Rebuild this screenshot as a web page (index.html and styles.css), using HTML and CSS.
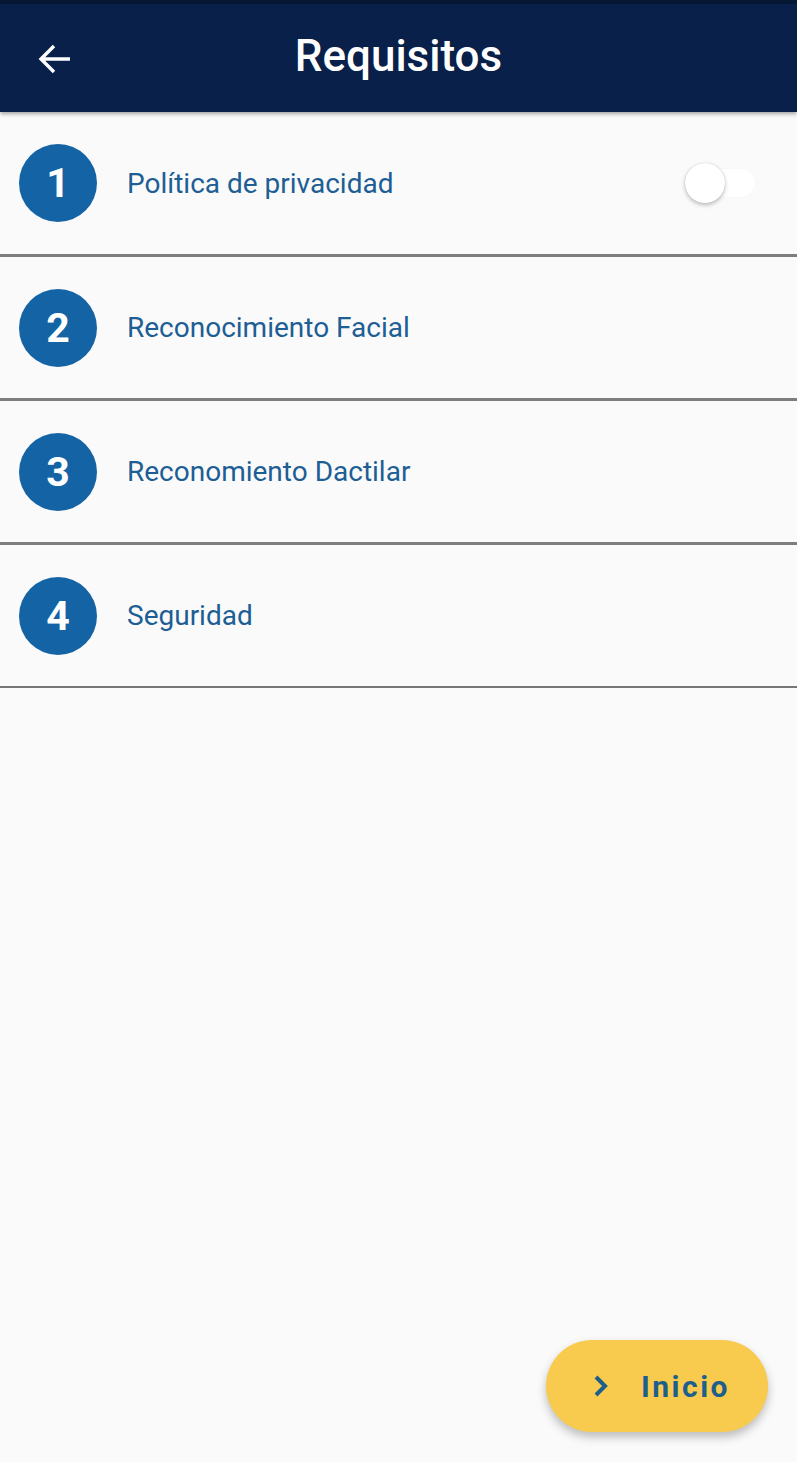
FILE: index.html
```html
<!DOCTYPE html>
<html lang="es">
<head>
<meta charset="utf-8">
<title>Requisitos</title>
<link rel="stylesheet" href="styles.css">
</head>
<body>
<div class="screen">
  <header class="appbar">
    <button class="back" aria-label="Atrás">
      <svg width="34" height="30" viewBox="0 0 34 30"><path d="M32 15H3M16 2L3 15l13 13" fill="none" stroke="#fff" stroke-width="3.4" stroke-linecap="butt" stroke-linejoin="miter"/></svg>
    </button>
    <h1 class="title">Requisitos</h1>
  </header>
  <ul class="steps">
    <li class="step first">
      <span class="num">1</span>
      <span class="label">Política de privacidad</span>
      <span class="switch"><span class="track"></span><span class="thumb"></span></span>
    </li>
    <li class="step">
      <span class="num">2</span>
      <span class="label">Reconocimiento Facial</span>
    </li>
    <li class="step">
      <span class="num">3</span>
      <span class="label">Reconomiento Dactilar</span>
    </li>
    <li class="step last">
      <span class="num">4</span>
      <span class="label">Seguridad</span>
    </li>
  </ul>
  <div class="fab-wrap">
    <button class="fab">
      <svg width="16" height="24" viewBox="0 0 16 24"><path d="M3 3l9 9-9 9" fill="none" stroke="#1d5e8c" stroke-width="4"/></svg>
      <span>Inicio</span>
    </button>
  </div>
</div>
</body>
</html>
```
FILE: styles.css
```css
* { box-sizing: border-box; }
html, body { margin: 0; padding: 0; }
body {
  background: #fafafa;
  font-family: Roboto, "Noto Sans", sans-serif;
  width: 797px;
  height: 1462px;
  overflow: hidden;
}
.screen {
  display: flex;
  flex-direction: column;
  height: 1462px;
}
.appbar {
  height: 112px;
  background: #08204a;
  border-top: 4px solid #061733;
  display: flex;
  align-items: center;
  justify-content: center;
  position: relative;
  box-shadow: 0 2px 4px rgba(0,0,0,0.35);
  z-index: 2;
}
.back {
  position: absolute;
  left: 38px;
  top: 40px;
  background: none;
  border: 0;
  padding: 0;
  display: flex;
}
.title {
  margin: 0;
  color: #fff;
  font-weight: 500;
  font-size: 44px;
  line-height: 1;
  margin-top: -4px;
}
.steps {
  list-style: none;
  margin: 0;
  padding: 0;
}
.step {
  height: 144px;
  border-bottom: 3px solid #7d7d7d;
  display: flex;
  align-items: center;
  padding-left: 19px;
  padding-right: 42px;
}
.step.first {
  height: 145px;
}
.step.last {
  height: 143px;
  border-bottom: 2px solid #777;
}
.num {
  width: 78px;
  height: 78px;
  border-radius: 50%;
  background: #1463a5;
  color: #fff;
  font-weight: 700;
  font-size: 41px;
  display: flex;
  align-items: center;
  justify-content: center;
  flex: none;
}
.label {
  margin-left: 30px;
  font-size: 28px;
  color: #1d5e94;
  flex: 1;
}
.switch {
  position: relative;
  width: 70px;
  height: 40px;
  flex: none;
}
.track {
  position: absolute;
  left: 16px;
  right: 0;
  top: 6px;
  height: 28px;
  border-radius: 14px;
  background: #ffffff;
  box-shadow: 0 0 2px rgba(0,0,0,0.04);
}
.thumb {
  position: absolute;
  left: 0;
  top: 0;
  width: 40px;
  height: 40px;
  border-radius: 50%;
  background: #fff;
  box-shadow: 0 2px 4px rgba(0,0,0,0.25), 0 0 1px rgba(0,0,0,0.2);
}
.fab-wrap {
  flex: 1;
  display: flex;
  justify-content: flex-end;
  align-items: flex-end;
  padding: 0 29px 30px 0;
}
.fab {
  width: 222px;
  height: 92px;
  border-radius: 46px;
  border: 0;
  background: #f8cb4e;
  box-shadow: 0 5px 10px rgba(0,0,0,0.25);
  display: flex;
  align-items: center;
  padding-left: 47px;
  gap: 32px;
  font-family: Roboto, sans-serif;
  font-weight: 700;
  font-size: 30px;
  letter-spacing: 2.5px;
  color: #1d5e8c;
}
```
